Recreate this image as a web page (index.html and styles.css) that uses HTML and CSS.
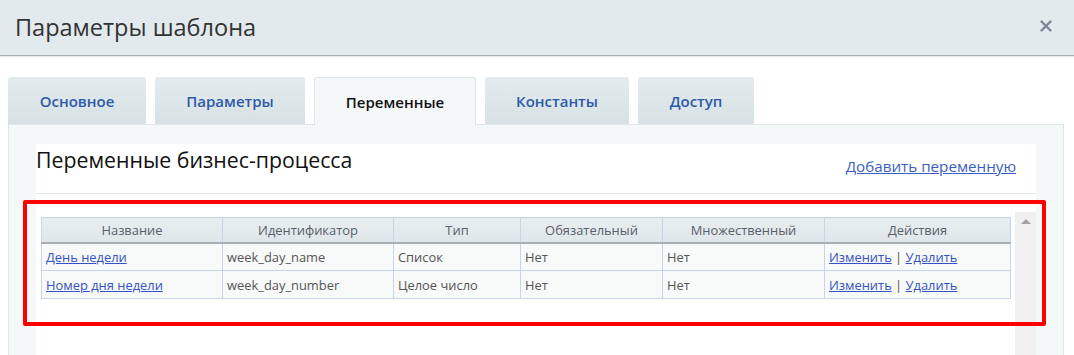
FILE: index.html
```html
<!DOCTYPE html>
<html lang="ru">
<head>
<meta charset="utf-8">
<title>Параметры шаблона</title>
<link rel="stylesheet" href="styles.css">
</head>
<body>
<div class="dialog">
  <header class="dlg-head">
    <h1 class="dlg-title">Параметры шаблона</h1>
    <button class="dlg-close" aria-label="Закрыть">
      <svg width="12" height="12" viewBox="0 0 12 12"><path d="M1.5 1.5 L10.5 10.5 M10.5 1.5 L1.5 10.5" stroke="#7d8797" stroke-width="2.4" stroke-linecap="round"/></svg>
    </button>
  </header>
  <div class="dlg-body">
    <nav class="tabs">
      <a class="tab">Основное</a>
      <a class="tab">Параметры</a>
      <a class="tab tab-active">Переменные</a>
      <a class="tab">Константы</a>
      <a class="tab">Доступ</a>
    </nav>
    <section class="panel">
      <div class="card">
        <div class="card-head">
          <h2 class="card-title">Переменные бизнес-процесса</h2>
          <a class="add-link" href="#">Добавить переменную</a>
        </div>
        <div class="scroller">
          <div class="scroll-content">
            <table class="vars">
              <thead>
                <tr>
                  <th class="c1">Название</th>
                  <th class="c2">Идентификатор</th>
                  <th class="c3">Тип</th>
                  <th class="c4">Обязательный</th>
                  <th class="c5">Множественный</th>
                  <th class="c6">Действия</th>
                </tr>
              </thead>
              <tbody>
                <tr>
                  <td><a href="#">День недели</a></td>
                  <td>week_day_name</td>
                  <td>Список</td>
                  <td>Нет</td>
                  <td>Нет</td>
                  <td><a href="#">Изменить</a> | <a href="#">Удалить</a></td>
                </tr>
                <tr>
                  <td><a href="#">Номер дня недели</a></td>
                  <td>week_day_number</td>
                  <td>Целое число</td>
                  <td>Нет</td>
                  <td>Нет</td>
                  <td><a href="#">Изменить</a> | <a href="#">Удалить</a></td>
                </tr>
              </tbody>
            </table>
          </div>
          <div class="scrollbar"><span class="arrow-up"></span></div>
        </div>
      </div>
      <div class="highlight"></div>
    </section>
  </div>
</div>
</body>
</html>
```
FILE: styles.css
```css
* { box-sizing: border-box; }
html, body { margin: 0; padding: 0; background: #fff; overflow: hidden; }
body { font-family: "Open Sans", "Noto Sans", sans-serif; color: #333; width: 1074px; height: 355px; }

.dlg-head {
  height: 56px;
  background: #e2eaed;
  border-bottom: 1px solid #a9aeb1;
  box-shadow: 0 1px 0 #e6e8e9;
  display: flex;
  align-items: center;
  justify-content: space-between;
  padding: 0 22px 0 15px;
}
.dlg-title {
  margin: 0;
  font-size: 23.5px;
  font-weight: 400;
  color: #333;
  padding-bottom: 2px;
}
.dlg-close {
  border: 0;
  background: none;
  padding: 0;
  width: 12px;
  height: 12px;
  display: flex;
  margin-top: -3px;
}

.dlg-body { padding: 21px 10px 0 8px; }

.tabs { display: flex; gap: 9px; height: 47px; }
.tab {
  height: 47px;
  display: flex;
  align-items: center;
  justify-content: center;
  font-size: 15px;
  font-weight: 600;
  color: #2d5ba8;
  background: linear-gradient(#e4ebee, #d7e1e4);
  border-radius: 3px 3px 0 0;
  padding-top: 1px;
}
.tab:nth-child(1) { width: 138px; }
.tab:nth-child(2) { width: 150px; }
.tab:nth-child(3) { width: 162px; }
.tab:nth-child(4) { width: 144px; }
.tab:nth-child(5) { width: 116px; }
.tab-active {
  background: #f5f8f9;
  color: #111;
  border: 1px solid #dbe4e9;
  border-bottom: 0;
  height: 48px;
  position: relative;
  z-index: 1;
}

.panel {
  position: relative;
  background: #f5f8f9;
  border: 1px solid #dde6eb;
  height: 240px;
  padding: 19px 27px 0 27px;
}

.card { background: #fff; }
.card-head {
  height: 50px;
  display: flex;
  justify-content: space-between;
  align-items: flex-start;
  border-bottom: 1px solid #dde3e8;
}
.card-title {
  margin: 0;
  font-size: 21.3px;
  font-weight: 400;
  color: #111;
  line-height: 30px;
  padding-top: 1px;
}
.add-link {
  margin: 12px 20px 0 0;
  font-size: 15.2px;
  color: #3a5ec4;
  text-decoration: underline;
}

.scroller {
  margin-top: 18px;
  display: flex;
  height: 160px;
}
.scroll-content {
  flex: 1;
  padding: 5px 4px 0 5px;
  background: #fff;
}
.scrollbar {
  width: 21px;
  background: #f0f0f0;
  display: flex;
  justify-content: center;
  padding-top: 7px;
}
.arrow-up {
  width: 0; height: 0;
  border-left: 5px solid transparent;
  border-right: 5px solid transparent;
  border-bottom: 5px solid #a3a3a3;
}

.vars {
  width: 100%;
  border-collapse: collapse;
  font-size: 12.9px;
  color: #555;
  border: 1px solid #c9d4e8;
}
.vars th {
  height: 25px;
  font-weight: 400;
  color: #59606a;
  background: linear-gradient(#e8eef0, #dfe6e9);
  border-left: 1px solid #c9d4e8;
  border-bottom: 2px solid #a9b0b4;
  text-align: center;
  padding: 0 4px;
}
.vars td {
  height: 28px;
  background: #f8f9f9;
  border: 1px solid #c9d4e8;
  padding: 0 4px;
  white-space: nowrap;
}
.vars a { color: #3353c4; text-decoration: underline; }
.c1 { width: 181px; }
.c2 { width: 171px; }
.c3 { width: 127px; }
.c4 { width: 142px; }
.c5 { width: 162px; }

.highlight {
  position: absolute;
  left: 14px;
  top: 75px;
  width: 1023px;
  height: 126px;
  border: 4px solid #ff0000;
  border-radius: 2px;
  pointer-events: none;
}
```
